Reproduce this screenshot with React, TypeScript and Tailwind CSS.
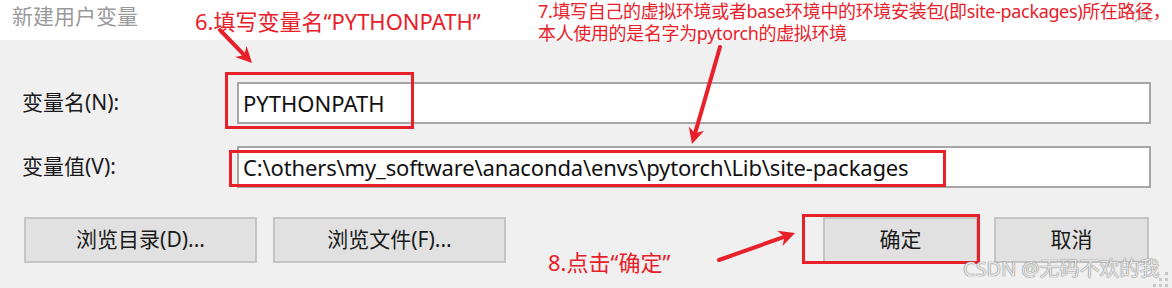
import type React from "react";

const FONT = { fontFamily: '"Noto Sans", "Noto Sans CJK SC", sans-serif' } as React.CSSProperties;

function arrowHead(x1: number, y1: number, x2: number, y2: number, len = 16, wid = 16) {
	const dx = x2 - x1;
	const dy = y2 - y1;
	const d = Math.hypot(dx, dy);
	const ux = dx / d;
	const uy = dy / d;
	const bx = x2 - ux * len;
	const by = y2 - uy * len;
	const nx = -uy * (wid / 2);
	const ny = ux * (wid / 2);
	const mx = x2 - ux * len * 0.7;
	const my = y2 - uy * len * 0.7;
	return `${x2},${y2} ${bx + nx},${by + ny} ${mx},${my} ${bx - nx},${by - ny}`;
}

function Arrow({ x1, y1, x2, y2 }: { x1: number; y1: number; x2: number; y2: number }) {
	const d = Math.hypot(x2 - x1, y2 - y1);
	const ex = x2 - ((x2 - x1) / d) * 10;
	const ey = y2 - ((y2 - y1) / d) * 10;
	return (
		<g>
			<line x1={x1} y1={y1} x2={ex} y2={ey} stroke="#e8202a" strokeWidth={4} strokeLinecap="round" />
			<polygon points={arrowHead(x1, y1, x2, y2)} fill="#e8202a" />
		</g>
	);
}

function WinButton({ label, className }: { label: string; className: string }) {
	return (
		<div
			className={`h-[46px] flex items-center justify-center bg-[#e1e1e1] border-2 border-[#c4c4c4] text-[21px] text-[#1a1a1a] ${className}`}
		>
			{label}
		</div>
	);
}

export default function App() {
	return (
		<div className="relative w-[1172px] h-[288px] overflow-hidden bg-[#f0f0f0]" style={FONT}>
			{/* Title bar */}
			<div className="h-[40px] bg-white flex items-start justify-between pl-[12px] pr-[20px]">
				<span className="text-[21px] leading-[30px] text-[#9a9a9a] mt-[1px]">新建用户变量</span>
				<svg className="mt-[8px]" width={18} height={15} viewBox="0 0 18 15">
					<path d="M1 1 L17 14 M17 1 L1 14" stroke="#c4c4c4" strokeWidth={2} />
				</svg>
			</div>

			{/* Fields */}
			<div className="flex flex-col gap-[22px] pt-[42px] pl-[22px] pr-[21px]">
				<div className="flex items-center h-[42px]">
					<span className="w-[215px] text-[21px] text-[#1a1a1a]">变量名(N):</span>
					<div className="flex-1 h-full bg-white border-2 border-[#a6a6a6] flex items-center pl-[4px] text-[22px] text-[#111]">
						PYTHONPATH
					</div>
				</div>
				<div className="flex items-center h-[42px]">
					<span className="w-[215px] text-[21px] text-[#1a1a1a]">变量值(V):</span>
					<div className="flex-1 h-full bg-white border-2 border-[#a6a6a6] flex items-center pl-[4px] text-[22px] tracking-[-0.15px] text-[#111]">
						C:\others\my_software\anaconda\envs\pytorch\Lib\site-packages
					</div>
				</div>
			</div>

			{/* Buttons */}
			<div className="flex justify-between mt-[29px] pl-[24px] pr-[23px]">
				<div className="flex gap-[16px]">
					<WinButton label="浏览目录(D)..." className="w-[233px]" />
					<WinButton label="浏览文件(F)..." className="w-[233px]" />
				</div>
				<div className="flex gap-[16px]">
					<WinButton label="确定" className="w-[155px]" />
					<WinButton label="取消" className="w-[155px]" />
				</div>
			</div>

			{/* Annotations */}
			<div className="absolute left-[225px] top-[72px] w-[189px] h-[57px] border-[3px] border-[#e8202a]" />
			<div className="absolute left-[229px] top-[150px] w-[717px] h-[37px] border-[3px] border-[#e8202a]" />
			<div className="absolute left-[802px] top-[214px] w-[178px] h-[50px] border-[3px] border-[#e8202a]" />

			<div className="absolute left-[195px] top-[6px] text-[22px] leading-[30px] text-[#e8202a]">
				6.填写变量名“PYTHONPATH”
			</div>
			<div className="absolute left-[538px] top-[0px] text-[18px] leading-[22px] tracking-[-0.35px] text-[#e8202a] whitespace-nowrap">
				<div>7.填写自己的虚拟环境或者base环境中的环境安装包(即site-packages)所在路径，</div>
				<div>本人使用的是名字为pytorch的虚拟环境</div>
			</div>
			<div className="absolute left-[548px] top-[247px] text-[22px] leading-[30px] text-[#e8202a]">
				8.点击“确定”
			</div>

			<svg className="absolute inset-0 pointer-events-none" width={1172} height={288}>
				<Arrow x1={220} y1={30} x2={252} y2={63} />
				<Arrow x1={720} y1={47} x2={692} y2={144} />
				<Arrow x1={719} y1={260} x2={795} y2={233} />
				{/* resize grip */}
				<g fill="#c8c8c8">
					<rect x={1165} y={272} width={3} height={3} />
					<rect x={1165} y={278} width={3} height={3} />
					<rect x={1159} y={278} width={3} height={3} />
					<rect x={1165} y={284} width={3} height={3} />
					<rect x={1159} y={284} width={3} height={3} />
					<rect x={1153} y={284} width={3} height={3} />
				</g>
			</svg>

			<div className="absolute left-[963px] top-[256px] text-[20px] leading-[26px] text-white/80 [text-shadow:0_0_1px_#777,0_0_1px_#777]">
				CSDN @无码不欢的我
			</div>
		</div>
	);
}
